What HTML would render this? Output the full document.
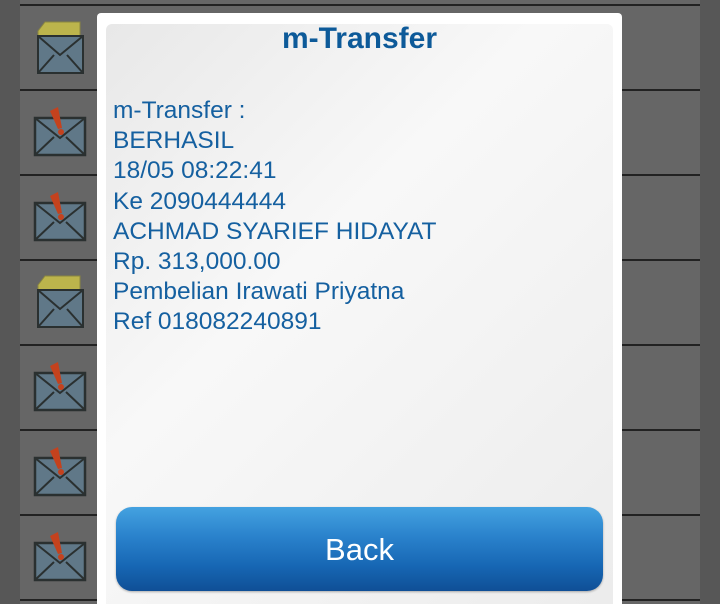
<!DOCTYPE html>
<html><head><style>
html,body{margin:0;padding:0;width:720px;height:604px;overflow:hidden;background:#666;font-family:"Liberation Sans",sans-serif;position:relative}
.side{position:absolute;left:0;top:0;width:20px;height:604px;background:#575757}
.rside{position:absolute;left:700px;top:0;width:20px;height:604px;background:#575757}
.line{position:absolute;left:20px;width:680px;height:2px;background:#222}
.icon{position:absolute;left:30px;width:60px;height:85px;overflow:visible}
.dlg{position:absolute;left:97px;top:13px;width:525px;height:591px;background:#fff;border-radius:4px 4px 0 0}
.inner{position:absolute;left:106px;top:24px;width:507px;height:580px;border-radius:6px 6px 0 0;background:linear-gradient(135deg,#e8e8e8 0%,#f8f8f8 40%,#f2f2f2 70%,#ececec 100%)}
.title{position:absolute;left:106px;width:507px;top:22px;text-align:center;font-weight:bold;font-size:30px;color:#0d5a99}
.txt{position:absolute;left:113px;top:96px;font-size:24.5px;line-height:30.2px;color:#1560a0;white-space:pre}
.btn{position:absolute;left:116px;top:507px;width:487px;height:84px;border-radius:16px;background:linear-gradient(#44a2e0 0%,#2a82cc 35%,#1767b4 70%,#0f4f96 100%);box-shadow:0 1px 2px rgba(0,0,0,.3);color:#fff;font-size:31px;text-align:center;line-height:86px}
</style></head><body>
<div class="side"></div><div class="rside"></div>
<div class="line" style="top:4px"></div>
<div class="line" style="top:89px"></div>
<div class="line" style="top:174px"></div>
<div class="line" style="top:259px"></div>
<div class="line" style="top:344px"></div>
<div class="line" style="top:429px"></div>
<div class="line" style="top:514px"></div>
<div class="line" style="top:599px"></div>

<svg width="0" height="0" style="position:absolute"><defs>
<symbol id="open" viewBox="0 0 60 85"><path d="M8 28 L15 19 L50 19 L50 34 L40 44 L8 36Z" fill="#bcb44c" stroke="#8a8640"/><rect x="8" y="33" width="45" height="37" fill="#607888" stroke="#2a3030" stroke-width="2"/><path d="M8 33 L30 52 L53 33 M8 70 L24 52 M53 70 L37 52" stroke="#2a3030" stroke-width="2" fill="none"/></symbol>
<symbol id="alert" viewBox="0 0 60 85"><rect x="5" y="28" width="50" height="37" fill="#607888" stroke="#2a3030" stroke-width="2.5"/><path d="M5 28 L30 48 L55 28 M5 65 L24 47 M55 65 L36 47" stroke="#2a3030" stroke-width="2" fill="none"/><path d="M20 21 L28 17 L32 38 L28 39Z" fill="#c4421e"/><circle cx="31" cy="42" r="3" fill="#c4421e"/></symbol>
</defs></svg>
<svg class="icon" style="top:3px"><use href="#open"/></svg>
<svg class="icon" style="top:90px"><use href="#alert"/></svg>
<svg class="icon" style="top:175px"><use href="#alert"/></svg>
<svg class="icon" style="top:257px"><use href="#open"/></svg>
<svg class="icon" style="top:345px"><use href="#alert"/></svg>
<svg class="icon" style="top:430px"><use href="#alert"/></svg>
<svg class="icon" style="top:515px"><use href="#alert"/></svg>

<div class="dlg"></div>
<div class="inner"></div>
<div class="title">m-Transfer</div>
<div class="txt">m-Transfer :
BERHASIL
18/05 08:22:41
Ke 2090444444
ACHMAD SYARIEF HIDAYAT
Rp. 313,000.00
Pembelian Irawati Priyatna
Ref 018082240891</div>
<div class="btn">Back</div>
</body></html>
